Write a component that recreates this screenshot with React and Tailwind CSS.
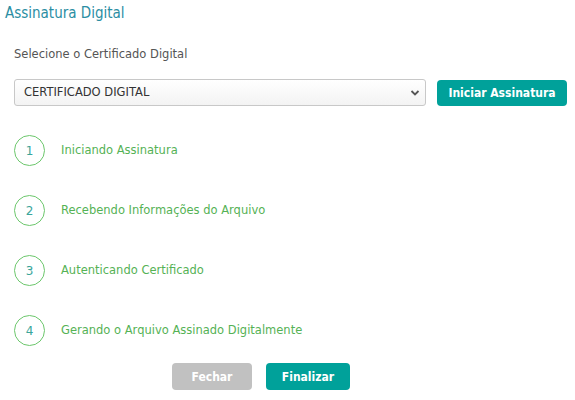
import React from "react";

const steps = [
  "Iniciando Assinatura",
  "Recebendo Informações do Arquivo",
  "Autenticando Certificado",
  "Gerando o Arquivo Assinado Digitalmente",
];

export default function App() {
  return (
    <div className="w-[575px] h-[400px] bg-white" style={{ fontFamily: "'DejaVu Sans', Tahoma, sans-serif" }}>
      <div className="pl-[5px] pt-[3px] text-[15px] leading-[20px] text-[#2b8ea3]" style={{ fontFamily: "'DejaVu Sans Condensed', 'DejaVu Sans', sans-serif" }}>
        Assinatura Digital
      </div>
      <div className="pl-[14px] pr-[8px]">
        <div className="mt-[23px] text-[11.5px] leading-[16px] text-[#555]">Selecione o Certificado Digital</div>
        <div className="mt-[17px] flex items-center gap-[11px]">
          <div className="relative w-[412px] h-[27px] rounded-[3px] border border-[#c8c8c8] bg-gradient-to-b from-white to-[#f3f3f3] flex items-center pl-[9px] text-[11.5px] text-[#333]">
            CERTIFICADO DIGITAL
            <svg className="absolute right-[5px] top-[9px]" width="10" height="8" viewBox="0 0 10 8">
              <path d="M1.5 2 L5 5.5 L8.5 2" fill="none" stroke="#555" strokeWidth="1.8" />
            </svg>
          </div>
          <button className="w-[130px] h-[26px] rounded-[4px] bg-[#00a19a] text-white text-[12px] font-semibold" style={{ fontFamily: "'DejaVu Sans Condensed', 'DejaVu Sans', sans-serif" }}>
            Iniciar Assinatura
          </button>
        </div>
        <div className="mt-[29px] flex flex-col gap-[29px]">
          {steps.map((s, i) => (
            <div key={i} className="flex items-center h-[31px]">
              <div className="w-[31px] h-[31px] rounded-full border border-[#6cc76c] flex items-center justify-center text-[12px] text-[#3aa59a]">
                {i + 1}
              </div>
              <div className="ml-[16px] text-[11.5px] text-[#55b255]">{s}</div>
            </div>
          ))}
        </div>
        <div className="mt-[17px] ml-[158px] flex gap-[14px]">
          <button className="w-[80px] h-[27px] rounded-[4px] bg-[#c1c1c1] text-white text-[12px] font-semibold" style={{ fontFamily: "'DejaVu Sans Condensed', 'DejaVu Sans', sans-serif" }}>
            Fechar
          </button>
          <button className="w-[84px] h-[27px] rounded-[4px] bg-[#00a19a] text-white text-[12px] font-semibold" style={{ fontFamily: "'DejaVu Sans Condensed', 'DejaVu Sans', sans-serif" }}>
            Finalizar
          </button>
        </div>
      </div>
    </div>
  );
}
